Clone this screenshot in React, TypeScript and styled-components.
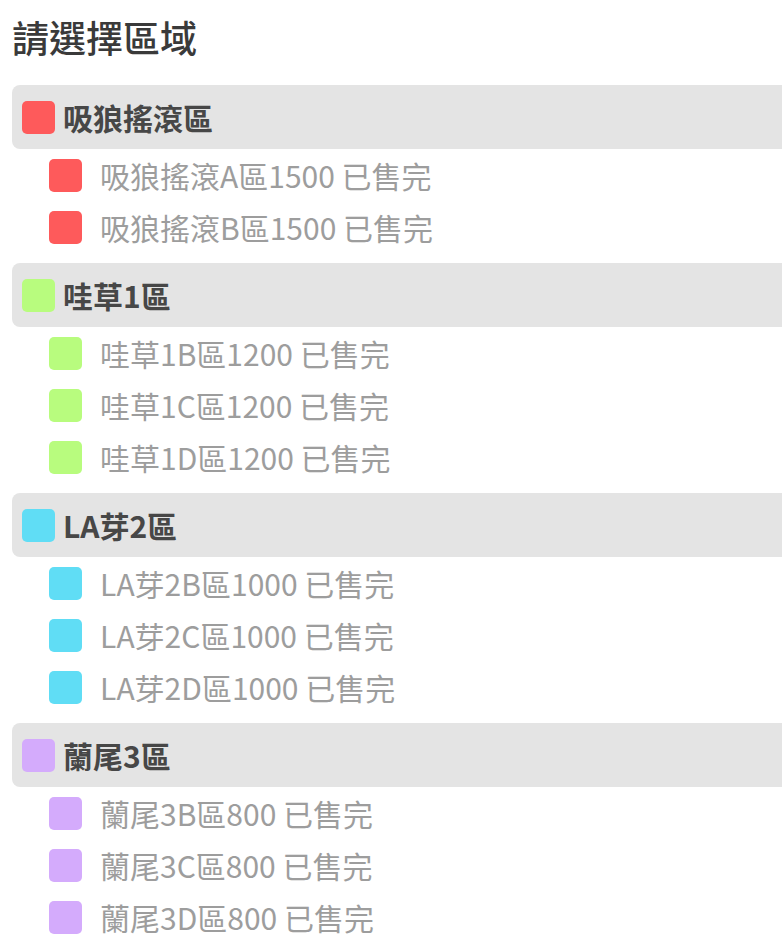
import React from 'react';
import styled, { createGlobalStyle } from 'styled-components';

const GlobalStyle = createGlobalStyle`
  html, body {
    margin: 0;
    padding: 0;
    background: #ffffff;
    overflow-x: hidden;
  }
  body {
    font-family: "Noto Sans CJK TC", "Noto Sans", sans-serif;
  }
`;

const Page = styled.div`
  padding: 10px 0 0 12px;
`;

const Title = styled.h1`
  margin: 0 0 20px 0;
  font-size: 37px;
  line-height: 55px;
  font-weight: 500;
  color: #3a3a3a;
`;

const Group = styled.section`
  & + & {
    margin-top: 10px;
  }
`;

const GroupHeader = styled.div`
  display: flex;
  align-items: center;
  gap: 8px;
  height: 64px;
  padding-left: 10px;
  margin-right: -20px;
  background: #e4e4e4;
  border-radius: 8px;
  font-size: 30px;
  font-weight: 700;
  color: #474747;
`;

const Swatch = styled.span<{ $color: string }>`
  flex: none;
  width: 33px;
  height: 33px;
  border-radius: 5px;
  background: ${(p) => p.$color};
`;

const ItemList = styled.ul`
  list-style: none;
  margin: 0;
  padding: 0 0 0 37px;
`;

const Item = styled.li`
  display: flex;
  align-items: center;
  gap: 18px;
  height: 52px;
  font-size: 30px;
  color: #9d9d9d;
`;

interface Zone {
  name: string;
  color: string;
  items: string[];
}

const zones: Zone[] = [
  {
    name: '吸狼搖滾區',
    color: '#fe5a5b',
    items: ['吸狼搖滾A區1500 已售完', '吸狼搖滾B區1500 已售完'],
  },
  {
    name: '哇草1區',
    color: '#b8fc7e',
    items: ['哇草1B區1200 已售完', '哇草1C區1200 已售完', '哇草1D區1200 已售完'],
  },
  {
    name: 'LA芽2區',
    color: '#60ddf5',
    items: ['LA芽2B區1000 已售完', 'LA芽2C區1000 已售完', 'LA芽2D區1000 已售完'],
  },
  {
    name: '蘭尾3區',
    color: '#d4abfc',
    items: ['蘭尾3B區800 已售完', '蘭尾3C區800 已售完', '蘭尾3D區800 已售完'],
  },
];

const App: React.FC = () => (
  <>
    <GlobalStyle />
    <Page>
      <Title>請選擇區域</Title>
      {zones.map((zone) => (
        <Group key={zone.name}>
          <GroupHeader>
            <Swatch $color={zone.color} />
            {zone.name}
          </GroupHeader>
          <ItemList>
            {zone.items.map((item) => (
              <Item key={item}>
                <Swatch $color={zone.color} />
                {item}
              </Item>
            ))}
          </ItemList>
        </Group>
      ))}
    </Page>
  </>
);

export default App;
